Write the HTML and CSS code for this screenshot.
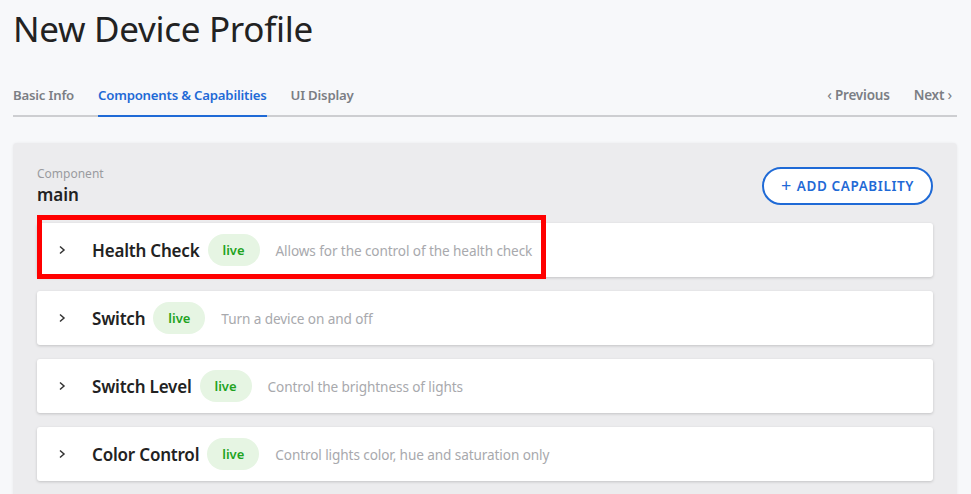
FILE: index.html
```html
<!DOCTYPE html>
<html>
<head>
<meta charset="utf-8">
<link rel="stylesheet" href="styles.css">
</head>
<body>
<div class="page">
  <h1 class="title">New Device Profile</h1>
  <nav class="tabs">
    <div class="tab-list">
      <span class="tab">Basic Info</span>
      <span class="tab active">Components &amp; Capabilities</span>
      <span class="tab">UI Display</span>
    </div>
    <div class="pager">
      <span class="pager-link"><span class="chev">‹</span> Previous</span>
      <span class="pager-link">Next <span class="chev">›</span></span>
    </div>
  </nav>
  <section class="panel">
    <div class="panel-head">
      <div class="comp">
        <div class="comp-label">Component</div>
        <div class="comp-name">main</div>
      </div>
      <button class="add-btn"><span class="plus">+</span> ADD CAPABILITY</button>
    </div>
    <div class="cards">
      <div class="card">
        <svg class="arrow" width="8" height="12" viewBox="0 0 8 12"><path d="M2 2.5 L6 6 L2 9.5" fill="none" stroke="#333" stroke-width="1.5"/></svg>
        <span class="cap-name">Health Check</span>
        <span class="badge">live</span>
        <span class="cap-desc">Allows for the control of the health check</span>
      </div>
      <div class="card">
        <svg class="arrow" width="8" height="12" viewBox="0 0 8 12"><path d="M2 2.5 L6 6 L2 9.5" fill="none" stroke="#333" stroke-width="1.5"/></svg>
        <span class="cap-name">Switch</span>
        <span class="badge">live</span>
        <span class="cap-desc">Turn a device on and off</span>
      </div>
      <div class="card">
        <svg class="arrow" width="8" height="12" viewBox="0 0 8 12"><path d="M2 2.5 L6 6 L2 9.5" fill="none" stroke="#333" stroke-width="1.5"/></svg>
        <span class="cap-name">Switch Level</span>
        <span class="badge">live</span>
        <span class="cap-desc">Control the brightness of lights</span>
      </div>
      <div class="card">
        <svg class="arrow" width="8" height="12" viewBox="0 0 8 12"><path d="M2 2.5 L6 6 L2 9.5" fill="none" stroke="#333" stroke-width="1.5"/></svg>
        <span class="cap-name">Color Control</span>
        <span class="badge">live</span>
        <span class="cap-desc">Control lights color, hue and saturation only</span>
      </div>
    </div>
    <div class="highlight"></div>
  </section>
</div>
</body>
</html>
```

FILE: styles.css
```css
* { box-sizing: border-box; }
html, body {
  margin: 0;
  padding: 0;
  background: #f7f8fa;
  font-family: "Noto Sans", "Open Sans", sans-serif;
  color: #222;
  overflow: hidden;
  height: 494px;
}
.page {
  padding: 0 14px 0 13px;
}
.title {
  margin: 0;
  padding-top: 6px;
  font-size: 35px;
  font-weight: 400;
  line-height: 46px;
  color: #222;
  letter-spacing: -0.3px;
}
.tabs {
  margin-top: 32px;
  display: flex;
  justify-content: space-between;
  align-items: flex-end;
  border-bottom: 2px solid #cdced1;
}
.tab-list {
  display: flex;
  gap: 24px;
}
.tab {
  font-size: 13.2px;
  font-weight: 600;
  color: #7b7e84;
  padding-bottom: 10px;
  border-bottom: 2px solid transparent;
  margin-bottom: -2px;
  line-height: 20px;
  letter-spacing: -0.2px;
}
.tab.active {
  color: #1f6ad6;
  border-bottom-color: #1f6ad6;
}
.pager {
  display: flex;
  gap: 24px;
  padding-right: 5px;
  padding-bottom: 10px;
}
.pager-link {
  font-size: 13.5px;
  font-weight: 600;
  color: #7b7e84;
  line-height: 20px;
  letter-spacing: -0.2px;
}
.chev {
  font-weight: 400;
  font-size: 15px;
}
.panel {
  position: relative;
  margin-top: 26px;
  background: #ececee;
  border-radius: 4px;
  box-shadow: 0 0 3px rgba(0,0,0,0.06);
  padding: 22px 24px 20px 24px;
  height: 400px;
}
.panel-head {
  display: flex;
  justify-content: space-between;
  align-items: flex-start;
}
.comp-label {
  font-size: 12px;
  color: #9a9b9f;
  line-height: 18px;
}
.comp-name {
  font-size: 17px;
  font-weight: 600;
  color: #222;
  line-height: 24px;
}
.add-btn {
  margin-top: 2px;
  height: 38px;
  width: 171px;
  border: 2px solid #1f6ad6;
  border-radius: 19px;
  background: #fff;
  color: #1f6ad6;
  font-family: inherit;
  font-size: 13.5px;
  font-weight: 600;
  letter-spacing: 0.6px;
  display: flex;
  align-items: center;
  justify-content: center;
  gap: 5px;
  padding: 0;
}
.plus {
  font-size: 18px;
  font-weight: 400;
  line-height: 1;
  margin-top: -2px;
}
.cards {
  margin-top: 16px;
  display: flex;
  flex-direction: column;
  gap: 14px;
}
.card {
  height: 54px;
  background: #fff;
  border-radius: 3px;
  box-shadow: 0 1px 3px rgba(0,0,0,0.18);
  display: flex;
  align-items: center;
  padding-left: 21px;
}
.arrow {
  margin-right: 26px;
}
.cap-name {
  font-size: 17px;
  font-weight: 600;
  color: #222;
  letter-spacing: -0.2px;
}
.badge {
  margin-left: 8px;
  width: 52px;
  height: 32px;
  border-radius: 16px;
  background: #e6f5e3;
  color: #1fa31f;
  font-size: 13px;
  font-weight: 600;
  display: flex;
  align-items: center;
  justify-content: center;
}
.cap-desc {
  margin-left: 16px;
  font-size: 13.6px;
  color: #a8a9ad;
  letter-spacing: -0.1px;
}
.highlight {
  position: absolute;
  left: 24px;
  top: 72px;
  width: 509px;
  height: 64px;
  border: 5px solid #ff0000;
  pointer-events: none;
}
```
